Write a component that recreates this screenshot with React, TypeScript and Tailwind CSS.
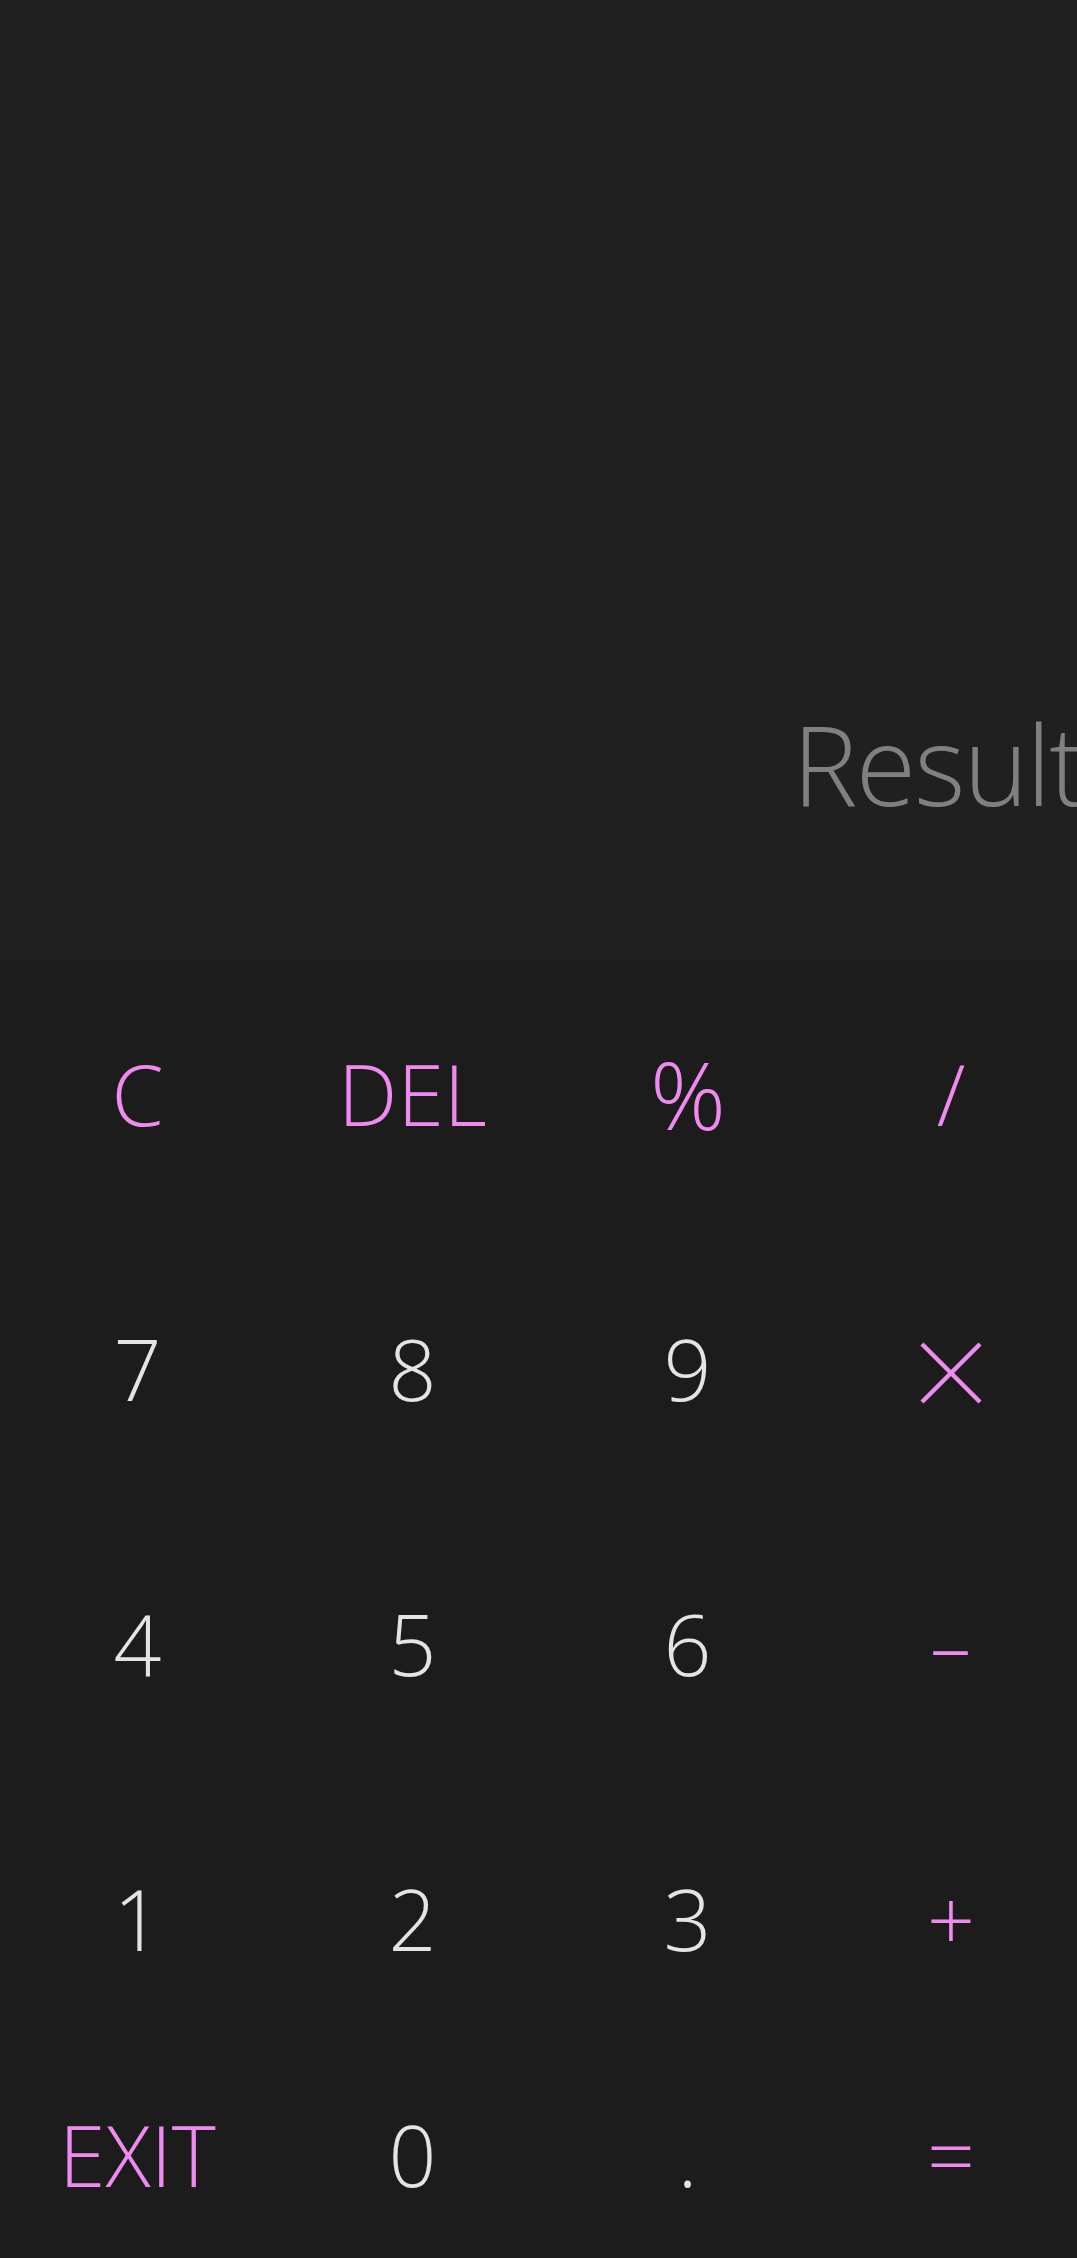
import React from "react";

const PINK = "text-[#ef8bef]";
const GRAY = "text-[#e4e4e4]";

type Key = { label: string; kind: "op" | "num"; icon?: "x"; extra?: string };

const rows: Key[][] = [
  [
    { label: "C", kind: "op" },
    { label: "DEL", kind: "op" },
    { label: "%", kind: "op", extra: "scale-[1.12]" },
    { label: "/", kind: "op" },
  ],
  [
    { label: "7", kind: "num" },
    { label: "8", kind: "num" },
    { label: "9", kind: "num" },
    { label: "x", kind: "op", icon: "x" },
  ],
  [
    { label: "4", kind: "num" },
    { label: "5", kind: "num" },
    { label: "6", kind: "num" },
    { label: "-", kind: "op", extra: "scale-x-[1.7]" },
  ],
  [
    { label: "1", kind: "num" },
    { label: "2", kind: "num" },
    { label: "3", kind: "num" },
    { label: "+", kind: "op" },
  ],
  [
    { label: "EXIT", kind: "op" },
    { label: "0", kind: "num" },
    { label: ".", kind: "num" },
    { label: "=", kind: "op" },
  ],
];

function Cell({ k, last }: { k: Key; last: boolean }) {
  return (
    <button
      className={`${last ? "flex-1 min-w-0" : "w-[275px] shrink-0"} h-full flex items-center justify-center bg-transparent`}
    >
      {k.icon === "x" ? (
        <svg width="64" height="64" viewBox="0 0 64 64" aria-label="multiply">
          <line x1="3" y1="3" x2="61" y2="61" stroke="#ef8bef" strokeWidth="4.5" />
          <line x1="61" y1="3" x2="3" y2="61" stroke="#ef8bef" strokeWidth="4.5" />
        </svg>
      ) : (
        <span
          className={`${k.kind === "op" ? PINK : GRAY} text-[84px] leading-none font-light -translate-y-[4px] inline-block ${k.extra ?? ""}`}
        >
          {k.label}
        </span>
      )}
    </button>
  );
}

export default function App() {
  return (
    <div
      className="w-[1077px] h-[2258px] flex flex-col overflow-hidden bg-[#1c1c1c]"
      style={{ fontFamily: '"Open Sans", "Noto Sans", sans-serif' }}
    >
      <div className="h-[960px] shrink-0 bg-[#202020] flex flex-col justify-end pb-[142px] overflow-hidden">
        <div className="flex justify-end whitespace-nowrap">
          <span className="text-[110px] leading-none text-[#808080] font-light tracking-[-2px] -mr-[7px]">Result</span>
        </div>
      </div>
      <div className="flex-1 min-h-0 flex flex-col overflow-hidden">
        {rows.map((r, i) => (
          <div
            key={i}
            className={`flex overflow-hidden ${i === rows.length - 1 ? "flex-1 min-h-0" : "h-[275px] shrink-0"}`}
          >
            {r.map((k, j) => (
              <Cell key={k.label} k={k} last={j === r.length - 1} />
            ))}
          </div>
        ))}
      </div>
    </div>
  );
}
